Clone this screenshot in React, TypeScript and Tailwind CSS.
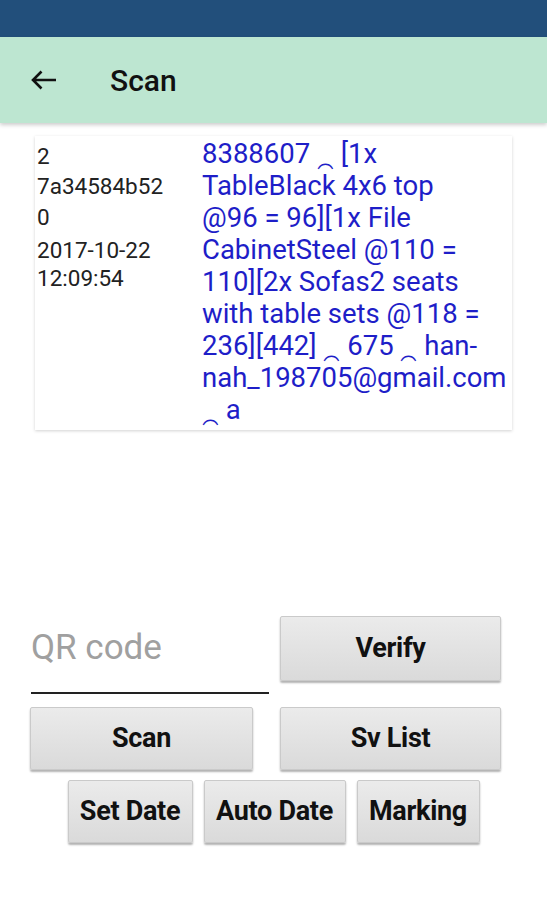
import React from "react";

const font = { fontFamily: "Roboto, 'Liberation Sans', sans-serif" };

const detailLines = [
  "8388607 \u2054 [1x",
  "TableBlack 4x6 top",
  "@96 = 96][1x File",
  "CabinetSteel @110 =",
  "110][2x Sofas2 seats",
  "with table sets @118 =",
  "236][442] \u2054 675 \u2054 han-",
  "nah_198705@gmail.com",
  "\u2054 a",
];

const Btn = ({ label, className }: { label: string; className: string }) => (
  <button
    className={
      "flex items-center justify-center rounded-[2px] border border-[#cacaca] bg-gradient-to-b from-[#ebebeb] to-[#dadada] text-[27px] font-bold tracking-[-0.3px] text-[#111] shadow-[0_2px_2px_rgba(0,0,0,0.3)] " +
      className
    }
  >
    {label}
  </button>
);

export default function App() {
  return (
    <div className="flex h-[900px] w-[547px] flex-col bg-white" style={font}>
      <div className="h-[37px] bg-[#224f7b]" />
      <div className="relative z-10 flex h-[86px] items-center bg-[#bde6d1] shadow-[0_2px_4px_rgba(0,0,0,0.2)]">
        <svg className="ml-[30px]" width="27" height="22" viewBox="0 0 27 22" fill="none">
          <path d="M3 11H26M11.5 2.5L3 11L11.5 19.5" stroke="#111" strokeWidth="2.6" />
        </svg>
        <span className="ml-[53px] text-[30px] font-medium text-[#111]">Scan</span>
      </div>

      <div className="ml-[35px] mt-[13px] flex h-[294px] w-[477px] overflow-hidden bg-white shadow-[0_1px_3px_rgba(0,0,0,0.18)]">
        <div className="w-[167px] shrink-0 pl-[2px] pt-[5px] text-[22.5px] text-[#222]">
          <div className="leading-[30px]">2</div>
          <div className="leading-[31px]">7a34584b52</div>
          <div className="leading-[31px]">0</div>
          <div className="leading-[28px] mt-[3px]">2017-10-22</div>
          <div className="leading-[28px]">12:09:54</div>
        </div>
        <div className="pt-[2px] text-[27.5px] leading-[32px] text-[#1e1ec8]">
          {detailLines.map((l) => (
            <div key={l} className="whitespace-nowrap">
              {l}
            </div>
          ))}
        </div>
      </div>

      <div className="flex-1" />

      <div className="flex flex-col pb-[57px]">
        <div className="flex items-start">
          <div className="ml-[31px] w-[238px] pt-[6px]">
            <div className="h-[70px] text-[35px] text-[#a0a0a0]">QR code</div>
            <div className="h-[2px] bg-[#222]" />
          </div>
          <Btn label="Verify" className="ml-[11px] h-[65px] w-[221px]" />
        </div>
        <div className="mt-[13px] flex">
          <Btn label="Scan" className="ml-[30px] h-[63px] w-[223px]" />
          <Btn label="Sv List" className="ml-[27px] h-[63px] w-[221px]" />
        </div>
        <div className="mt-[10px] flex justify-center gap-[11px]">
          <Btn label="Set Date" className="h-[63px] w-[125px]" />
          <Btn label="Auto Date" className="h-[63px] w-[142px]" />
          <Btn label="Marking" className="h-[63px] w-[123px]" />
        </div>
      </div>
    </div>
  );
}
